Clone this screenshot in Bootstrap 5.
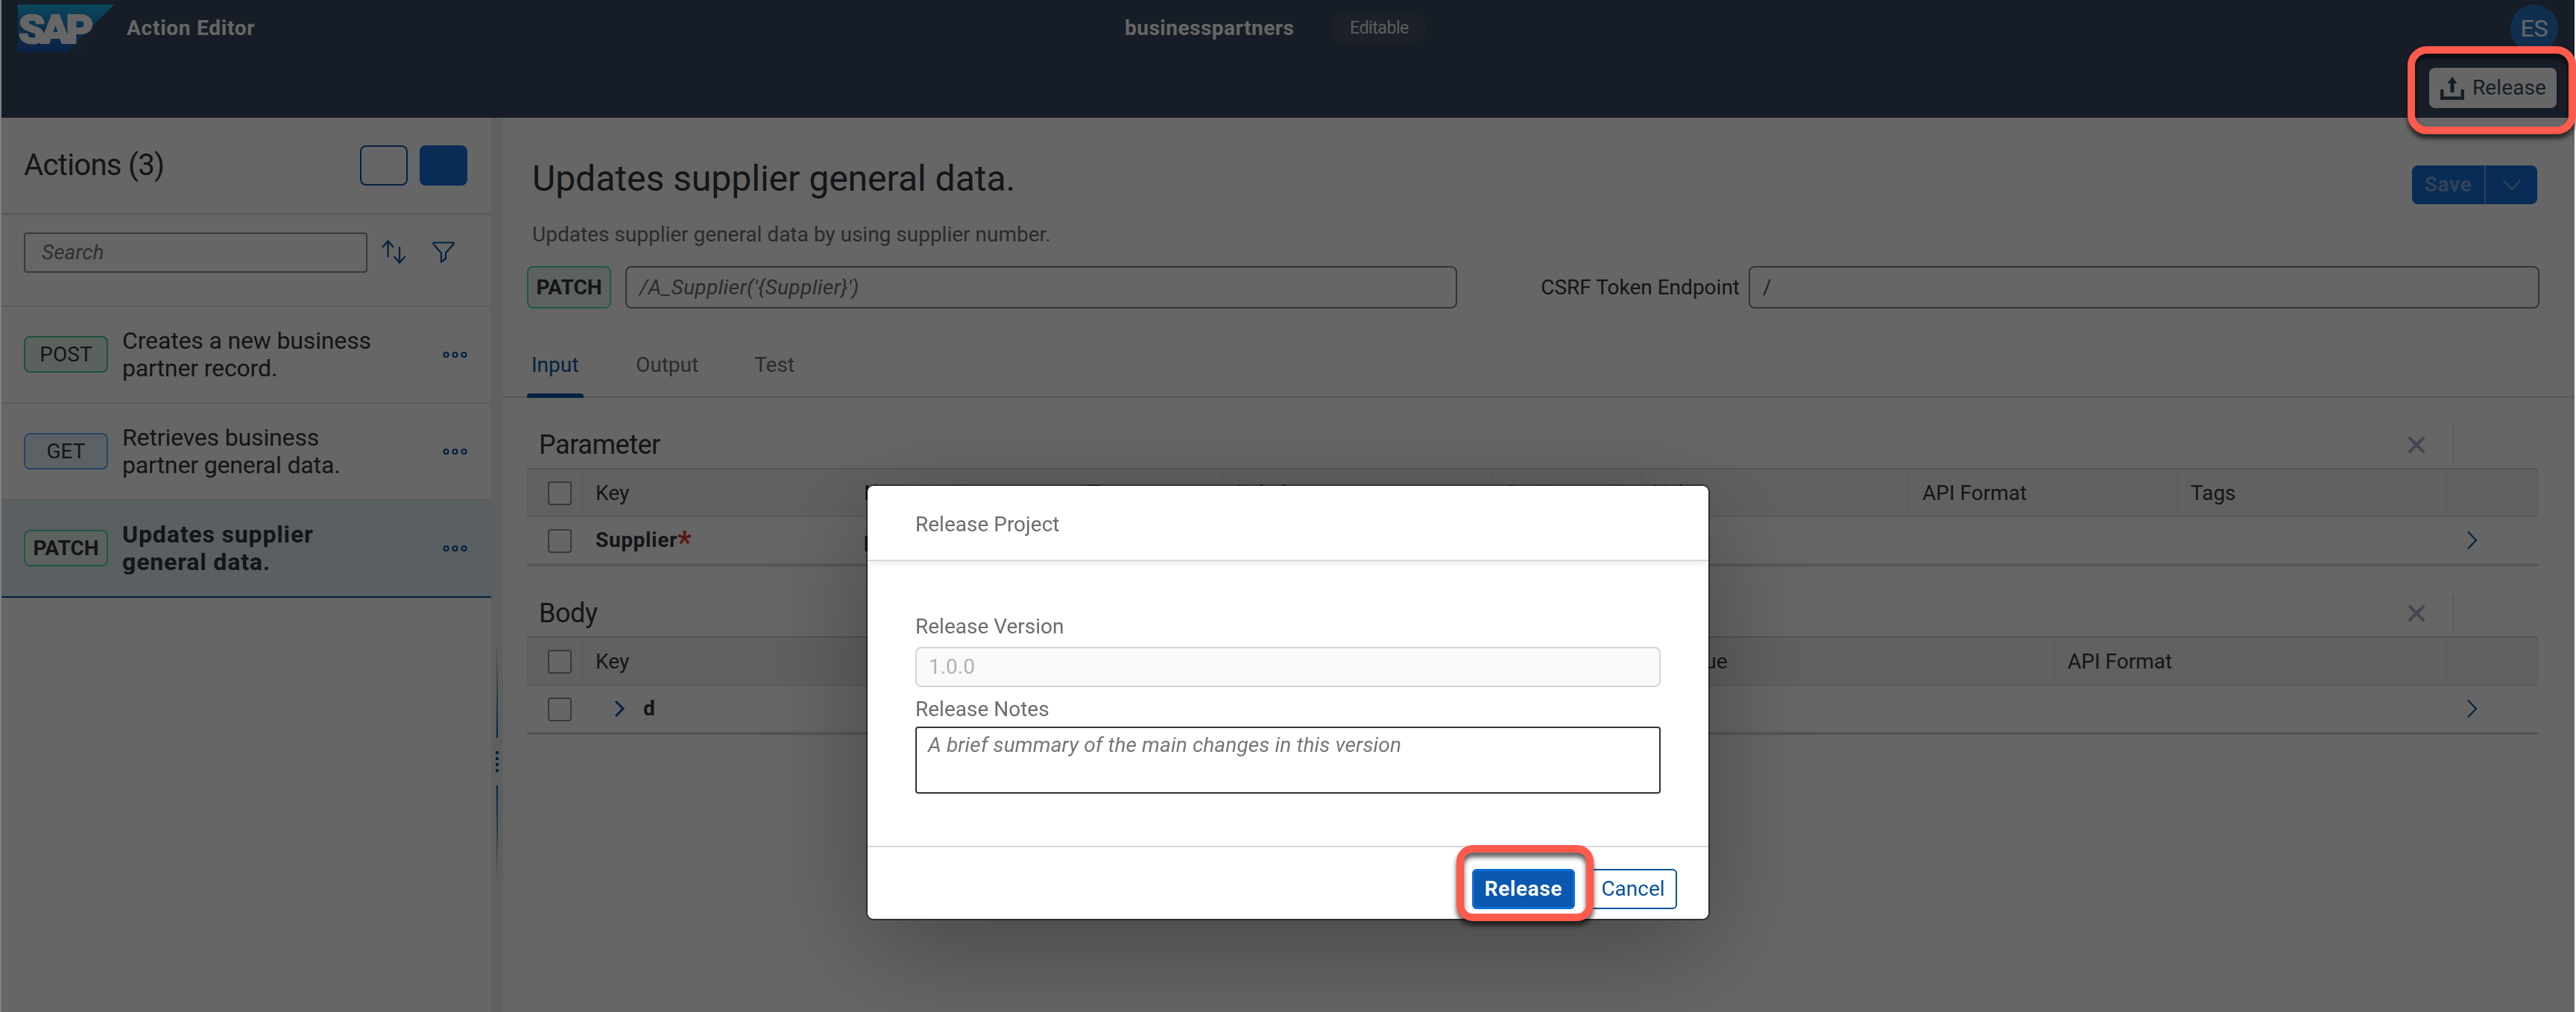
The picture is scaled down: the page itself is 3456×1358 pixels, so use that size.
<!DOCTYPE html>
<html lang="en">
<head>
<meta charset="utf-8">
<title>Action Editor</title>
<link href="https://cdn.jsdelivr.net/npm/bootstrap@5.3.0/dist/css/bootstrap.min.css" rel="stylesheet">
<style>
  body { font-family: Roboto, "Liberation Sans", sans-serif; font-size: 28px; line-height: 36px; color: #32363a; background: #fff; overflow: hidden; }
  svg { display: block; flex: none; }
  .app { width: 3454px; height: 1358px; padding-left: 2px; }
  .shell { height: 158px; background: #394a5f; color: #fff; }
  .shell-top { height: 76px; padding: 0 22px 0 22px; }
  .shell-left { width: 1485px; }
  .bold-ls { font-weight: 700; letter-spacing: .65px; }
  .state-pill { height: 42px; width: 128px; margin-left: 50px; border-radius: 21px; background: #465461; color: #e3e7ea; font-size: 23px; letter-spacing: -.4px; line-height: 42px; text-align: center; }
  .avatar { width: 64px; height: 64px; border-radius: 50%; background: #2a76c4; font-size: 32px; line-height: 64px; text-align: center; }
  .shell-actions { padding: 15px 24px 0 0; }
  .btn-shell { height: 54px; width: 171px; padding: 0 0 0 14px; border-radius: 8px; background: #fff; color: #354a5f; gap: 11px; font-size: 28px; letter-spacing: .1px; }

  .side { width: 657px; flex: none; }
  .side-head { height: 128px; padding: 0 32px 0 30px; }
  .side-title { font-size: 40px; letter-spacing: -.65px; line-height: 48px; }
  .sq { width: 64px; height: 54px; border-radius: 8px; border: 2px solid #0854a0; }
  .sq-solid { background: #146ed4; border-color: #146ed4; }
  .side-filter { border-top: 3px solid #e4e4e4; height: 124px; padding: 23px 0 0 30px; }
  .search-box { width: 461px; height: 54px; border: 2px solid #89919a; border-radius: 4px; padding: 0 22px; line-height: 49px; font-style: italic; color: #74777a; }
  .act { height: 130px; border-top: 2px solid #e4e4e4; padding: 27px 32px 0 30px; font-size: 32px; line-height: 37px; }
  .act.current { background: #e0eef6; height: 132px; border-bottom: 2px solid #0854a0; font-weight: 700; }
  .act-last { border-top: 1px solid #e4e4e4; height: 2px; }
  .verb { width: 113px; height: 49px; border: 2px solid; border-radius: 8px; font-size: 28px; line-height: 45px; text-align: center; flex: none; }
  .verb-post { border-color: #49cc90; background: #e4f5ec; }
  .verb-get { border-color: #61affe; background: #e6f2ff; }
  .verb-patch { border-color: #50dcb4; background: #e8f4ec; font-weight: 700; }
  .act .verb { margin-top: 12px; }
  .act-text { margin-left: 19px; width: 400px; letter-spacing: -.15px; }
  .current .act-text { letter-spacing: .85px; }
  .act-more { margin: 32px 0 0 auto; }

  .split { width: 16px; flex: none; background: #e8efec; padding-top: 705px; }
  .split i { display: block; width: 2px; height: 127px; background: linear-gradient(to top, #0854a0, rgba(8,84,160,0)); }
  .split i.down { background: linear-gradient(to bottom, #0854a0, rgba(8,84,160,0)); }
  .split b { display: block; width: 4px; height: 4px; background: #0854a0; }
  .split-dots { gap: 4px; margin: 18px 0; }

  .work-head { padding: 54px 50px 0 39px; }
  .work-title { font-size: 48px; line-height: 56px; }
  .save { height: 52px; width: 168px; margin-top: 10px; border-radius: 8px; background: #146ed4; color: #7aa6dc; overflow: hidden; }
  .save-text { width: 97px; line-height: 52px; text-align: center; }
  .save-drop { flex: 1; border-left: 2px solid #6f9fd6; }
  .desc { padding: 23px 0 0 39px; color: #6a6d70; }
  .endpoint { padding: 24px 47px 0 32px; }
  .endpoint .verb { height: 57px; line-height: 53px; margin: 0; }
  .field { height: 57px; border: 2px solid #808890; border-radius: 8px; padding: 0 17px; line-height: 53px; }
  .field-path { width: 1116px; margin-left: 19px; font-style: italic; letter-spacing: .4px; color: #6a6d70; }
  .field-csrf { width: 1061px; color: #51555a; }
  .tabs { height: 120px; border-bottom: 2px solid #d9d9d9; padding-left: 32px; }
  .tab-item { color: #6a6d70; padding: 58px 7px 0; height: 120px; }
  .tab-item.on { color: #0854a0; width: 76px; padding-left: 6px; position: relative; }
  .tab-item.on::after { content: ""; position: absolute; left: 0; right: 0; bottom: 0; height: 6px; background: #0854a0; border-radius: 4px 4px 0 0; }

  .block { width: 2698px; margin-left: 32px; }
  .block-bar { height: 94px; padding: 40px 0 8px 16px; }
  .block-title { font-size: 36px; letter-spacing: -.45px; }
  .block-rule { width: 1px; height: 48px; background: #c8cacc; margin: 0 113px 0 37px; }
  .trow { height: 62px; }
  .trow > div { padding-left: 17px; line-height: 62px; flex: none; }
  .trow.heads { height: 66px; background: #f2f2f2; border-top: 2px solid #d4d4d4; border-bottom: 2px solid #e4e4e4; border-left: 2px solid #e8e8e8; }
  .trow.heads > div { border-right: 2px solid #e8e8e8; line-height: 64px; }
  .trow > div.sel { padding: 1px 0 0 28px; width: 75px; display: flex; align-items: center; }
  .trow.heads > div.sel { width: 73px; padding-left: 26px; }
  .tick { width: 32px; height: 32px; border: 2px solid #89919a; border-radius: 4px; background: #fff; }
  .trow-end { height: 4px; background: #dcdcdc; border-bottom: 2px solid #cdcdcd; }
  .trow > .go { padding-right: 80px; }
  .c360 { width: 360px; } .c300 { width: 300px; } .c200 { width: 200px; } .c361 { width: 361px; }
  .c450 { width: 450px; } .c999 { width: 999px; } .c526 { width: 526px; }
  .star { color: #e03a3a; font-size: 42px; line-height: 0; vertical-align: -8px; }

  .shade { position: fixed; inset: 0 2px 0 0; background: rgba(0,0,0,.6); border-left: 2px solid rgba(255,255,255,.17); }
  .dlg { position: fixed; left: 1164px; top: 652px; width: 1128px; height: 581px; background: #fff; border-radius: 8px; box-shadow: 0 0 0 2px rgba(0,0,0,.48), 0 40px 160px rgba(0,0,0,.32); color: #6a6d70; }
  .dlg-head { height: 101px; padding: 0 64px; line-height: 103px; border-bottom: 2px solid #d9d9d9; box-shadow: 0 4px 8px rgba(0,0,0,.08); }
  .dlg-main { height: 382px; padding: 70px 64px 0; }
  .dlg-version { height: 54px; border: 2px solid #d0d5d9; border-radius: 8px; background: #fafafa; color: #b0b2b4; padding: 0 16px; line-height: 50px; margin: 9px 0 12px; }
  .dlg-notes { height: 90px; border: 2px solid #32363a; border-radius: 4px; padding: 5px 15px; font-style: italic; letter-spacing: .14px; color: #74777a; margin-top: 5px; }
  .dlg-foot { height: 98px; border-top: 2px solid #d9d9d9; padding: 29px 42px 0 0; }
  .dlg-btn { height: 54px; border-radius: 6px; font-size: 28px; line-height: 48px; padding: 0; text-align: center; }
  .dlg-go { width: 138px; background: #0a58b0; border: 3px solid #0c6ddb; color: #fff; }
  .dlg-no { width: 118px; margin-left: 19px; border: 2px solid #0854a0; color: #0854a0; line-height: 50px; }
  .callout { position: fixed; border: 10px solid #ff5a4c; border-radius: 26px; filter: drop-shadow(0 6px 3px rgba(0,0,0,.65)); }
  .callout-top { left: 3230px; top: 62px; width: 226px; height: 118px; }
  .callout-dlg { left: 1954px; top: 1134px; width: 184px; height: 102px; border-radius: 22px; }
</style>
</head>
<body>
<div class="app d-flex flex-column">
  <header class="shell">
    <div class="shell-top d-flex align-items-center">
      <div class="shell-left d-flex align-items-center">
        <svg width="129" height="64" viewBox="0 0 129 64">
          <defs><linearGradient id="lg" x1="0" y1="0" x2="0" y2="1"><stop offset="0" stop-color="#1eb4e8"/><stop offset=".5" stop-color="#1b78bf"/><stop offset="1" stop-color="#1e55b4"/></linearGradient></defs>
          <path d="M0 0H129L66 64H0Z" fill="url(#lg)"/>
          <text x="1" y="51.500" font-family="Roboto, sans-serif" font-weight="900" font-size="54" textLength="95" lengthAdjust="spacingAndGlyphs" letter-spacing="-5" fill="#fff" stroke="#fff" stroke-width="2">SAP</text>
          <text x="80" y="63" font-family="Roboto, sans-serif" font-size="10" fill="#1e5ec4">®</text>
        </svg>
        <div class="bold-ls" style="margin-left:17px;letter-spacing:.75px">Action Editor</div>
      </div>
      <div class="bold-ls" style="letter-spacing:.5px">businesspartners</div>
      <div class="state-pill">Editable</div>
      <div class="avatar ms-auto">ES</div>
    </div>
    <div class="shell-actions d-flex justify-content-end">
      <button class="btn btn-shell d-flex align-items-center">
        <svg width="32" height="32" viewBox="0 0 32 32" fill="#354a5f"><path d="M16 1L22.500 10H18.500V22H13.500V10H9.500ZM0 18H4.500V27.500H27.500V18H32V32H0Z"/></svg>
        Release
      </button>
    </div>
  </header>

  <div class="d-flex flex-grow-1">
    <aside class="side">
      <div class="side-head d-flex align-items-center">
        <div class="side-title">Actions (3)</div>
        <div class="sq ms-auto"></div>
        <div class="sq sq-solid ms-3"></div>
      </div>
      <div class="side-filter d-flex">
        <div class="search-box">Search</div>
        <svg style="margin:9px 0 0 19px" width="34" height="34" viewBox="0 0 34 34" fill="none" stroke="#0854a0" stroke-width="2.200"><path d="M8.500 24V2M1 11L8.500 2.500L16 11M24 10V32M16.500 23L24 31.500L31.500 23"/></svg>
        <svg style="margin:12px 0 0 34px" width="30" height="30" viewBox="0 0 30 30" fill="none" stroke="#0854a0" stroke-width="2.200" stroke-linejoin="round"><path d="M1.500 1.500H28.500V3.500L18 15.500V23L12 27.500V15.500L1.500 3.500Z"/></svg>
      </div>
      <div class="act d-flex">
        <div class="verb verb-post">POST</div>
        <div class="act-text">Creates a new business<br>partner record.</div>
        <svg class="act-more" width="33" height="10" viewBox="0 0 33 10" fill="none" stroke="#0854a0" stroke-width="2.200"><circle cx="4.500" cy="5" r="3"/><circle cx="16.500" cy="5" r="3"/><circle cx="28.500" cy="5" r="3"/></svg>
      </div>
      <div class="act d-flex">
        <div class="verb verb-get">GET</div>
        <div class="act-text">Retrieves business<br>partner general data.</div>
        <svg class="act-more" width="33" height="10" viewBox="0 0 33 10" fill="none" stroke="#0854a0" stroke-width="2.200"><circle cx="4.500" cy="5" r="3"/><circle cx="16.500" cy="5" r="3"/><circle cx="28.500" cy="5" r="3"/></svg>
      </div>
      <div class="act current d-flex">
        <div class="verb verb-patch">PATCH</div>
        <div class="act-text">Updates supplier<br>general data.</div>
        <svg class="act-more" width="33" height="10" viewBox="0 0 33 10" fill="none" stroke="#0854a0" stroke-width="2.200"><circle cx="4.500" cy="5" r="3"/><circle cx="16.500" cy="5" r="3"/><circle cx="28.500" cy="5" r="3"/></svg>
      </div>
      <div class="act-last"></div>
    </aside>

    <div class="split d-flex flex-column align-items-center">
      <i></i>
      <div class="split-dots d-flex flex-column"><b></b><b></b><b></b><b></b></div>
      <i class="down"></i>
    </div>

    <main class="flex-grow-1">
      <div class="work-head d-flex justify-content-between">
        <div class="work-title">Updates supplier general data.</div>
        <div class="save d-flex">
          <div class="save-text bold-ls">Save</div>
          <div class="save-drop d-flex align-items-center justify-content-center"><svg width="26" height="16" viewBox="0 0 26 16" fill="none" stroke="#7aa6dc" stroke-width="2"><path d="M1.500 2L13 14L24.500 2"/></svg></div>
        </div>
      </div>
      <div class="desc">Updates supplier general data by using supplier number.</div>
      <div class="endpoint d-flex align-items-center">
        <div class="verb verb-patch">PATCH</div>
        <div class="field field-path">/A_Supplier('{Supplier}')</div>
        <div class="ms-auto" style="margin-right:12px">CSRF Token Endpoint</div>
        <div class="field field-csrf">/</div>
      </div>
      <div class="tabs d-flex">
        <div class="tab-item on">Input</div>
        <div class="tab-item" style="margin-left:63px">Output</div>
        <div class="tab-item" style="margin-left:61px">Test</div>
      </div>

      <section class="block">
        <div class="block-bar d-flex align-items-center">
          <div class="block-title me-auto">Parameter</div>
          <svg width="24" height="24" viewBox="0 0 24 24" stroke="#a3b3c9" stroke-width="4" stroke-linecap="round"><path d="M3 3L21 21M21 3L3 21"/></svg>
          <div class="block-rule"></div>
        </div>
        <div class="trow heads d-flex">
          <div class="sel"><span class="tick"></span></div><div class="c360">Key</div><div class="c300">Name</div><div class="c200">Type</div><div class="c360">Label</div><div class="c200">Static</div><div class="c360">Value</div><div class="c360">API Format</div><div class="c361">Tags</div><div class="flex-grow-1"></div>
        </div>
        <div class="trow d-flex">
          <div class="sel"><span class="tick"></span></div><div class="c360 bold-ls">Supplier<span class="star">*</span></div><div class="c300 bold-ls">path</div>
          <div class="go ms-auto d-flex align-items-center"><svg width="16" height="26" viewBox="0 0 16 26" fill="none" stroke="#0854a0" stroke-width="2.200"><path d="M2 1.500L13 13L2 24.500"/></svg></div>
        </div>
        <div class="trow-end"></div>
      </section>

      <section class="block">
        <div class="block-bar d-flex align-items-center">
          <div class="block-title me-auto">Body</div>
          <svg width="24" height="24" viewBox="0 0 24 24" stroke="#a3b3c9" stroke-width="4" stroke-linecap="round"><path d="M3 3L21 21M21 3L3 21"/></svg>
          <div class="block-rule"></div>
        </div>
        <div class="trow heads d-flex">
          <div class="sel"><span class="tick"></span></div><div class="c450">Key</div><div class="c999"></div><div class="c526">Value</div><div class="c526">API Format</div><div class="flex-grow-1"></div>
        </div>
        <div class="trow d-flex">
          <div class="sel"><span class="tick"></span></div>
          <div class="c450 fw-bold d-flex align-items-center" style="padding-left:42px"><svg width="15" height="24" viewBox="0 0 15 24" fill="none" stroke="#0854a0" stroke-width="3"><path d="M2 2L12 12L2 22"/></svg><span style="margin-left:24px">d</span></div>
          <div class="go ms-auto d-flex align-items-center"><svg width="16" height="26" viewBox="0 0 16 26" fill="none" stroke="#0854a0" stroke-width="2.200"><path d="M2 1.500L13 13L2 24.500"/></svg></div>
        </div>
        <div class="trow-end"></div>
      </section>
    </main>
  </div>
</div>

<div class="shade"></div>

<div class="dlg" role="dialog">
  <div class="dlg-head">Release Project</div>
  <div class="dlg-main">
    <div>Release Version</div>
    <div class="dlg-version">1.0.0</div>
    <div>Release Notes</div>
    <div class="dlg-notes">A brief summary of the main changes in this version</div>
  </div>
  <div class="dlg-foot d-flex justify-content-end">
    <div class="dlg-btn dlg-go bold-ls">Release</div>
    <div class="dlg-btn dlg-no">Cancel</div>
  </div>
</div>

<div class="callout callout-top"></div>
<div class="callout callout-dlg"></div>
<script src="https://cdn.jsdelivr.net/npm/bootstrap@5.3.0/dist/js/bootstrap.bundle.min.js"></script>
</body>
</html>
